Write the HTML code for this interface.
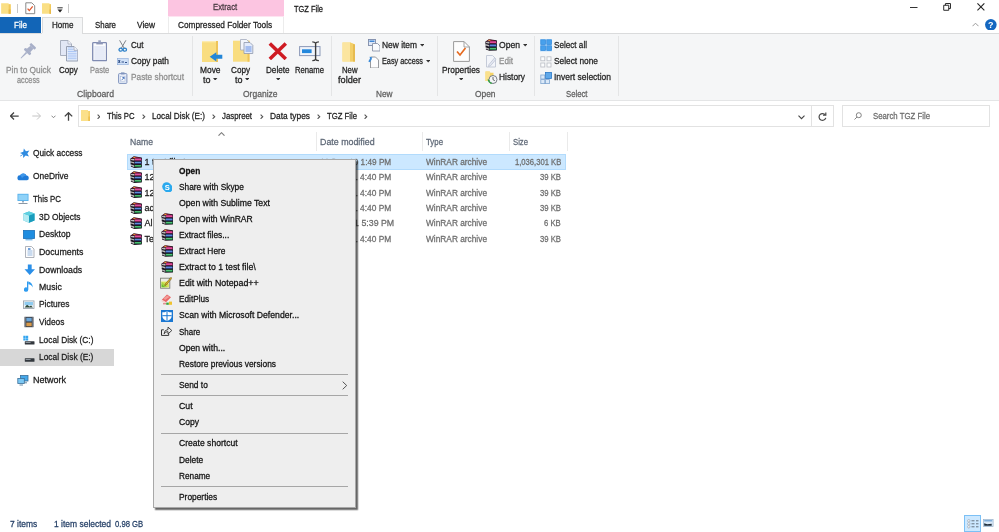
<!DOCTYPE html>
<html><head><meta charset="utf-8"><title>TGZ File</title>
<style>
html,body{margin:0;padding:0;background:#fff;}
body{width:999px;height:532px;overflow:hidden;position:relative;font-family:"Liberation Sans",sans-serif;}
.b{position:absolute;display:block;}
.t{-webkit-text-stroke:0.26px;transform-origin:0 0;position:absolute;white-space:nowrap;line-height:12px;height:12px;}
#w{position:absolute;left:0;top:0;width:999px;height:532px;overflow:hidden;will-change:transform;}
</style></head><body><div id="w">
<div class="b" style="left:0px;top:0px;width:999px;height:17px;background:#fff;"></div>
<div class="b" style="left:168px;top:0px;width:116px;height:16px;background:#fcc5e1;"></div>
<div class="b" style="left:168px;top:16px;width:116px;height:1px;background:#fee4f1;"></div>
<div class="t" style="left:212.80px;top:1.00px;font-size:9.00px;color:#45383f;transform:scaleX(0.8641);">Extract</div>
<div class="t" style="left:294.00px;top:3.00px;font-size:8.80px;color:#1a1a1a;transform:scaleX(0.8475);">TGZ File</div>
<svg class="b" style="left:1.2px;top:2.7px;" width="9.8" height="11" viewBox="0 0 9.500 11"><path d="M0 0.300h7.500v1h2v9.500h-9.500z" fill="#fadf85"/><path d="M7.500 1.300h2v9.500h-2z" fill="#f1c95c"/><path d="M7.500 6.500h2v4.300h-2z" fill="#e8b94a"/></svg>
<div class="b" style="left:17px;top:4px;width:1px;height:9px;background:#c8c8c8;"></div>
<svg class="b" style="left:25px;top:2.2px;" width="10.5" height="12.5" viewBox="0 0 10.5 12.5"><path d="M0.8 0.8h6l2.9 2.9v8h-8.9z" fill="#fff" stroke="#8a8a8a" stroke-width="1"/><path d="M2.6 6.6l1.7 2 3.4-4.2" fill="none" stroke="#e0552a" stroke-width="1.3"/></svg>
<svg class="b" style="left:41.8px;top:2.7px;" width="9.5" height="11" viewBox="0 0 9.500 11"><path d="M0 0.300h7.500v1h2v9.500h-9.500z" fill="#fadf85"/><path d="M7.500 1.300h2v9.500h-2z" fill="#f1c95c"/><path d="M7.500 6.500h2v4.300h-2z" fill="#e8b94a"/></svg>
<svg class="b" style="left:56.5px;top:6.5px;" width="6" height="6" viewBox="0 0 6 6"><rect x="0.3" y="0.3" width="5.4" height="1" fill="#333"/><path d="M0.5 2.6h5l-2.5 2.8z" fill="#222"/></svg>
<div class="b" style="left:68px;top:4px;width:1px;height:9px;background:#c8c8c8;"></div>
<svg class="b" style="left:910.4px;top:6.9px;" width="7.5" height="1" viewBox="0 0 7.500 1"><rect width="7.500" height="1" fill="#333"/></svg>
<svg class="b" style="left:943px;top:3.1px;" width="8.2" height="7.8" viewBox="0 0 9 9"><path d="M0.600 2.600h5.800v5.800h-5.800z" fill="none" stroke="#2a2a2a" stroke-width="1.150"/><path d="M2.600 2.600v-2h5.800v5.800h-2" fill="none" stroke="#2a2a2a" stroke-width="1.150"/></svg>
<svg class="b" style="left:977px;top:3.3px;" width="7.8" height="7.8" viewBox="0 0 9 9"><path d="M0.500 0.500l8 8M8.500 0.500l-8 8" stroke="#222" stroke-width="1.250" fill="none"/></svg>
<div class="b" style="left:0px;top:17px;width:999px;height:16.5px;background:#fff;"></div>
<div class="b" style="left:0px;top:17px;width:41px;height:16px;background:#1265b7;"></div>
<div class="t" style="left:14.00px;top:19.00px;font-size:9.00px;color:#fff;transform:scaleX(0.8965);">File</div>
<div class="b" style="left:41.5px;top:17px;width:41.5px;height:17px;background:#f5f6f7;border:1px solid #dadbdc;border-bottom:none;box-sizing:border-box;"></div>
<div class="t" style="left:51.50px;top:19.00px;font-size:9.00px;color:#232323;transform:scaleX(0.8956);">Home</div>
<div class="t" style="left:94.50px;top:19.00px;font-size:9.00px;color:#232323;transform:scaleX(0.8745);">Share</div>
<div class="t" style="left:137.00px;top:19.00px;font-size:9.00px;color:#232323;transform:scaleX(0.9305);">View</div>
<div class="b" style="left:168px;top:17px;width:116px;height:16px;background:#fff;border-left:1px solid #ececec;border-right:1px solid #ececec;box-sizing:border-box;"></div>
<div class="t" style="left:177.80px;top:19.00px;font-size:9.00px;color:#232323;transform:scaleX(0.9202);">Compressed Folder Tools</div>
<svg class="b" style="left:971.5px;top:21.5px;" width="7" height="5" viewBox="0 0 7 5"><path d="M0.5 4.2l3-3 3 3" fill="none" stroke="#9a9a9a" stroke-width="1"/></svg>
<svg class="b" style="left:985.2px;top:18.6px;" width="11.7" height="11.7" viewBox="0 0 11.500 11.500"><circle cx="5.750" cy="5.750" r="5.700" fill="#1467c0"/><text x="5.750" y="9.100" font-size="8.800" font-weight="700" text-anchor="middle" fill="#fff" font-family="Liberation Sans, sans-serif">?</text></svg>
<div class="b" style="left:0px;top:33px;width:999px;height:67.5px;background:#f5f6f7;border-top:1px solid #dadbdc;border-bottom:1px solid #e4e5e6;box-sizing:border-box;"></div>
<div class="b" style="left:42px;top:33px;width:40px;height:1.2px;background:#f5f6f7;"></div>
<div class="b" style="left:191.5px;top:36px;width:1px;height:60px;background:#e4e5e6;"></div>
<div class="b" style="left:331px;top:36px;width:1px;height:60px;background:#e4e5e6;"></div>
<div class="b" style="left:437px;top:36px;width:1px;height:60px;background:#e4e5e6;"></div>
<div class="b" style="left:534px;top:36px;width:1px;height:60px;background:#e4e5e6;"></div>
<div class="b" style="left:617.5px;top:36px;width:1px;height:60px;background:#e4e5e6;"></div>
<svg class="b" style="left:18px;top:40px;" width="20" height="20" viewBox="18 40 20 20"><g transform="translate(26.300,52.800) rotate(45)" fill="#a7afc8"><rect x="-3.600" y="-10.500" width="7.200" height="2.600" rx="0.800"/><path d="M-2.100 -8h4.200l.400 5.200h-5z"/><rect x="-4.200" y="-3.200" width="8.400" height="2.800" rx="1"/><path d="M-0.900 -0.500h1.800l-.500 8.200h-.800z"/></g></svg>
<div class="t" style="left:5.90px;top:64.00px;font-size:9.00px;color:#8e8e8e;transform:scaleX(0.9234);">Pin to Quick</div>
<div class="t" style="left:17.00px;top:74.00px;font-size:9.00px;color:#8e8e8e;transform:scaleX(0.8104);">access</div>
<svg class="b" style="left:59.8px;top:40.2px;" width="18.5" height="21.5" viewBox="0 0 18.500 21.500"><path d="M0.500 0.500h7.500l3.500 3.500v11.500h-11z" fill="#e2e7f5" stroke="#a0a7b8" stroke-width="0.900"/><path d="M8 0.500v3.500h3.500" fill="#f4f6fb" stroke="#a0a7b8" stroke-width="0.700"/><path d="M6.500 6.500h7.500l3.800 3.800v10.700h-11.300z" fill="#e6eefc" stroke="#8f97aa" stroke-width="0.900"/><g stroke="#a6c2f4" stroke-width="0.900"><path d="M7.800 11.500h8.800M7.800 13.300h8.800M7.800 15.100h8.800M7.800 16.900h8.800M7.800 18.700h8.800"/><path d="M7.800 9.700h5.500M7.800 7.900h5"/></g><path d="M14 6.500v3.800h3.800" fill="#f4f7fd" stroke="#8f97aa" stroke-width="0.700"/></svg>
<div class="t" style="left:58.80px;top:64.00px;font-size:9.00px;color:#232323;transform:scaleX(0.8948);">Copy</div>
<svg class="b" style="left:92px;top:40px;" width="15.2" height="21.5" viewBox="0 0 15.200 21.500"><rect x="0.700" y="2.700" width="13.800" height="18" rx="0.800" fill="#fbfcfe" stroke="#7f8bb2" stroke-width="1.300"/><path d="M4.300 2h6.600v2.400h-6.600z" fill="#8b95b6"/><rect x="6.300" y="0.300" width="2.600" height="2.200" fill="#9aa3c0"/><g stroke="#c9d3ee" stroke-width="0.800"><path d="M2.300 7h10.600M2.300 9h10.600M2.300 11h10.600M2.300 13h10.600M2.300 15h10.600M2.300 17h10.600M2.300 19h10.600"/></g></svg>
<div class="t" style="left:89.50px;top:64.00px;font-size:9.00px;color:#8e8e8e;transform:scaleX(0.8343);">Paste</div>
<svg class="b" style="left:118.3px;top:39.5px;" width="9.5" height="12" viewBox="0 0 9.500 12"><path d="M1.600 0.300l4.600 8M7.900 0.300l-4.600 8" stroke="#7d8288" stroke-width="1" fill="none"/><ellipse cx="2.700" cy="9.700" rx="1.700" ry="1.500" fill="none" stroke="#2a7fc8" stroke-width="1.300"/><ellipse cx="6.800" cy="9.700" rx="1.700" ry="1.500" fill="none" stroke="#2a7fc8" stroke-width="1.300"/></svg>
<div class="t" style="left:131.00px;top:39.00px;font-size:9.00px;color:#232323;transform:scaleX(0.8925);">Cut</div>
<svg class="b" style="left:117px;top:58px;" width="11.5" height="7" viewBox="0 0 11.500 7"><rect x="0.300" y="0.300" width="10.900" height="6.400" fill="#cfe0f7" stroke="#8aa9d6" stroke-width="0.600"/><path d="M1.500 2l1.500 3M3 2l-1.500 3M4.500 4h2.500M8 4.500h2" stroke="#1f3f7a" stroke-width="0.900"/></svg>
<div class="t" style="left:131.00px;top:55.00px;font-size:9.00px;color:#232323;transform:scaleX(0.9263);">Copy path</div>
<svg class="b" style="left:118px;top:71.5px;" width="9.5" height="12" viewBox="0 0 9.500 12"><rect x="0.600" y="1.600" width="8.300" height="9.800" rx="0.800" fill="#e6ecf8" stroke="#7f93bd" stroke-width="1"/><rect x="3" y="0.400" width="3.500" height="2" fill="#7f93bd"/><rect x="2.600" y="4.500" width="4.400" height="4.600" fill="#fff" stroke="#9fb0d2" stroke-width="0.500"/><path d="M3.600 8.200l2.400-2.600M4.400 5.500h1.700v1.700" stroke="#2c5fb3" stroke-width="0.800" fill="none"/></svg>
<div class="t" style="left:131.00px;top:71.00px;font-size:9.00px;color:#8e8e8e;transform:scaleX(0.9213);">Paste shortcut</div>
<div class="t" style="left:77.00px;top:88.00px;font-size:9.00px;color:#5f5f5f;transform:scaleX(0.9605);">Clipboard</div>
<svg class="b" style="left:202px;top:40.5px;" width="20.5" height="21.5" viewBox="0 0 20.500 21.500"><path d="M0 0h16v21h-16z" fill="#f9dd80"/><path d="M0 0h16v1.300h-16z" fill="#fcebb0"/><path d="M14 0h2v21h-2z" fill="#eec45a"/><path d="M20.300 13.800h-6v-2.600l-6.600 4.600 6.600 4.600v-2.600h6z" fill="#2386d8"/></svg>
<div class="t" style="left:199.50px;top:64.00px;font-size:9.00px;color:#232323;transform:scaleX(0.9315);">Move</div>
<div class="t" style="left:203.00px;top:74.00px;font-size:9.00px;color:#232323;transform:scaleX(0.9993);">to</div>
<svg class="b" style="left:213.2px;top:77.8px;" width="4.4" height="2.6" viewBox="0 0 5 3"><path d="M0 0h5l-2.500 3z" fill="#333"/></svg>
<svg class="b" style="left:233px;top:38.8px;" width="20.5" height="23" viewBox="0 0 20.500 23"><path d="M0 1.700h16.500v21h-16.500z" fill="#f9dd80"/><path d="M14.500 1.700h2v21h-2z" fill="#eec45a"/><path d="M7.500 0.500h6l2.500 2.500v8h-8.500z" fill="#f2f5fb" stroke="#a3abbd" stroke-width="0.800"/><path d="M11 3.500h6l2.800 2.800v8.200h-8.800z" fill="#e3ebfb" stroke="#8f98ac" stroke-width="0.800"/><rect x="12.500" y="7" width="6" height="6" fill="#a4bdf0"/></svg>
<div class="t" style="left:231.00px;top:64.00px;font-size:9.00px;color:#232323;transform:scaleX(0.9044);">Copy</div>
<div class="t" style="left:234.50px;top:74.00px;font-size:9.00px;color:#232323;transform:scaleX(0.9993);">to</div>
<svg class="b" style="left:244.5px;top:77.8px;" width="4.4" height="2.6" viewBox="0 0 5 3"><path d="M0 0h5l-2.500 3z" fill="#333"/></svg>
<svg class="b" style="left:268px;top:41.8px;" width="19.5" height="18.5" viewBox="0 0 19.500 18.500"><path d="M1.800 1.500l16 15.500M17.800 1.500l-16 15.500" stroke="#cf1b23" stroke-width="3.500" fill="none"/></svg>
<div class="t" style="left:265.50px;top:64.00px;font-size:9.00px;color:#232323;transform:scaleX(0.9034);">Delete</div>
<svg class="b" style="left:275.5px;top:77.8px;" width="4.4" height="2.6" viewBox="0 0 5 3"><path d="M0 0h5l-2.500 3z" fill="#333"/></svg>
<svg class="b" style="left:299px;top:41px;" width="23" height="20.5" viewBox="0 0 23 20.500"><rect x="0.600" y="5.600" width="20.400" height="9" fill="#f0f4fb" stroke="#8c99b8" stroke-width="1"/><rect x="3" y="8.300" width="9.600" height="3.800" fill="#2387dc"/><path d="M13.300 0.900q2.400 0 3.300 1.300q0.900-1.300 3.300-1.300M16.600 2v16.500M13.300 19.600q2.400 0 3.300-1.300q0.900 1.300 3.300 1.300" stroke="#3a3a3a" stroke-width="1.400" fill="none"/></svg>
<div class="t" style="left:295.00px;top:64.00px;font-size:9.00px;color:#232323;transform:scaleX(0.8525);">Rename</div>
<div class="t" style="left:243.00px;top:88.00px;font-size:9.00px;color:#5f5f5f;transform:scaleX(0.9448);">Organize</div>
<svg class="b" style="left:342px;top:42px;" width="14" height="20" viewBox="0 0 14 20"><path d="M0.500 0.500h8l4.500 2v17h-12.500z" fill="#f9dc7d"/><path d="M0.500 0.500h7.500v19h-7.500z" fill="#fbe5a0"/><path d="M8 0.500l5 2v17l-5-0z" fill="#f3cf68"/><path d="M11 2l2 0.800v16.700h-2z" fill="#e6bb50"/></svg>
<div class="t" style="left:342.00px;top:64.00px;font-size:9.00px;color:#232323;transform:scaleX(0.8609);">New</div>
<div class="t" style="left:338.00px;top:74.00px;font-size:9.00px;color:#232323;transform:scaleX(1.0217);">folder</div>
<svg class="b" style="left:367.5px;top:39px;" width="12.5" height="12.5" viewBox="0 0 12.500 12.500"><rect x="0.500" y="0.500" width="7" height="6" fill="#dfe8f8" stroke="#7d8aa8" stroke-width="0.900"/><rect x="1.500" y="1.500" width="5" height="1.500" fill="#3f86d6"/><path d="M4.500 4.500h5l2.500 2.500v5h-7.500z" fill="#fafbfe" stroke="#8a93a8" stroke-width="0.900"/></svg>
<div class="t" style="left:382.00px;top:39.00px;font-size:9.00px;color:#232323;transform:scaleX(0.9332);">New item</div>
<svg class="b" style="left:419.5px;top:44px;" width="4.4" height="2.6" viewBox="0 0 5 3"><path d="M0 0h5l-2.500 3z" fill="#333"/></svg>
<svg class="b" style="left:368px;top:55.5px;" width="11.5" height="12.5" viewBox="0 0 11.500 12.500"><path d="M2.500 1h5l3 3v8h-8z" fill="#fdfdfe" stroke="#8c8f94" stroke-width="0.900"/><path d="M0.300 5.500l2.200-4 1.500 1.200-2 3.500z" fill="#3a8ad8"/><path d="M1.500 0.800l3 0.700-2 2z" fill="#3a8ad8"/></svg>
<div class="t" style="left:382.00px;top:55.00px;font-size:9.00px;color:#232323;transform:scaleX(0.8116);">Easy access</div>
<svg class="b" style="left:426px;top:60px;" width="4.4" height="2.6" viewBox="0 0 5 3"><path d="M0 0h5l-2.500 3z" fill="#333"/></svg>
<div class="t" style="left:375.50px;top:88.00px;font-size:9.00px;color:#5f5f5f;transform:scaleX(0.9165);">New</div>
<svg class="b" style="left:452.5px;top:40.5px;" width="17" height="21" viewBox="0 0 17 21"><path d="M0.600 0.600h10.500l5.300 5.300v14.500h-15.800z" fill="#fdfdfd" stroke="#9a9a9a" stroke-width="1"/><path d="M11 0.600v5.400h5.400" fill="none" stroke="#9a9a9a" stroke-width="0.900"/><path d="M4 10.500l3 3.500 5.500-7" fill="none" stroke="#e66a1f" stroke-width="1.700"/></svg>
<div class="t" style="left:442.00px;top:64.00px;font-size:9.00px;color:#232323;transform:scaleX(0.9265);">Properties</div>
<svg class="b" style="left:459px;top:77.8px;" width="4.4" height="2.6" viewBox="0 0 5 3"><path d="M0 0h5l-2.500 3z" fill="#333"/></svg>
<svg class="b" style="left:484.5px;top:39px;" width="12" height="12" viewBox="0 0 12 12"><path d="M0.200 2.700L3.800 0.200L11.700 1.300Q12.300 3 11.700 4.600Q12.300 6.400 11.700 8Q12.300 9.700 11.700 11.400L4.300 11.800L0.800 10.500L1 9.200L0.500 7.500L0.800 6L0.300 4.300Z" fill="#1d1622"/><path d="M1 2.500L3.900 0.600L11 1.500L4.800 2.100Z" fill="#8c1a3c"/><path d="M2.900 1.200L4.100 0.600L5.800 2L4.500 2.200Z" fill="#e8a030"/><path d="M4.800 2.300H11.200Q11.700 3.300 11.200 4.300H4.800Z" fill="#d92a84"/><path d="M5.200 3.100H11" stroke="#f584c0" stroke-width="0.600"/><path d="M4.600 5.600H11.200Q11.700 6.500 11.200 7.400H4.600Z" fill="#3562c6"/><path d="M5 6.300H11" stroke="#86b4f2" stroke-width="0.600"/><path d="M4.600 8.800H11.200Q11.700 9.700 11.200 10.700H4.600Z" fill="#1f9a4a"/><path d="M5 9.500H11" stroke="#74d894" stroke-width="0.600"/><path d="M0.700 2.900L4.300 2.800V4.500L0.900 3.900Z" fill="#f1f1f1"/><path d="M0.800 3.400L4.300 3.700" stroke="#444" stroke-width="0.350"/><path d="M0.800 5.300L4.100 6.100V7.500L1 6.500Z" fill="#f1f1f1"/><path d="M0.900 5.900L4.100 6.800" stroke="#444" stroke-width="0.350"/><path d="M1 8.400L4.100 9.400V10.800L1.200 9.700Z" fill="#f1f1f1"/><path d="M1.100 9L4.100 10.100" stroke="#444" stroke-width="0.350"/></svg>
<div class="t" style="left:499.00px;top:39.00px;font-size:9.00px;color:#232323;transform:scaleX(0.9539);">Open</div>
<svg class="b" style="left:523px;top:44px;" width="4.4" height="2.6" viewBox="0 0 5 3"><path d="M0 0h5l-2.500 3z" fill="#333"/></svg>
<svg class="b" style="left:485.5px;top:55px;" width="11" height="12.5" viewBox="0 0 11 12.500"><path d="M0.500 0.500h6l3 3v8.500h-9z" fill="#f3f5fa" stroke="#c0c6d4" stroke-width="0.900"/><path d="M3 9.500l5.500-6.500 1.500 1.300-5.500 6.500-2 .7z" fill="#e4e8f2" stroke="#b5bccd" stroke-width="0.700"/></svg>
<div class="t" style="left:499.00px;top:55.00px;font-size:9.00px;color:#8e8e8e;transform:scaleX(0.9028);">Edit</div>
<svg class="b" style="left:485px;top:71px;" width="12.5" height="13" viewBox="0 0 12.500 13"><path d="M0.500 0.500h4l1 1.200h3v8.300h-8z" fill="#f5d366"/><path d="M0.500 0.500h4.500v9.500h-4.500z" fill="#fae08c"/><circle cx="8" cy="8.500" r="4" fill="#f4f6f8" stroke="#6a7078" stroke-width="0.900"/><path d="M8 6v2.700l1.800 1" stroke="#444" stroke-width="0.800" fill="none"/><path d="M3.200 8.500a4.800 4.800 0 0 0 3.500 4" stroke="#2da13c" stroke-width="1.400" fill="none"/></svg>
<div class="t" style="left:499.00px;top:71.00px;font-size:9.00px;color:#232323;transform:scaleX(0.9285);">History</div>
<div class="t" style="left:475.00px;top:88.00px;font-size:9.00px;color:#5f5f5f;transform:scaleX(0.9312);">Open</div>
<svg class="b" style="left:540px;top:39.3px;" width="12.4" height="12.4" viewBox="0 0 12.400 12.400"><rect x="0" y="0" width="12.400" height="12.400" fill="#b9dcf9"/><g fill="#48a0ec" stroke="#2c84d8" stroke-width="0.600"><rect x="0.800" y="0.800" width="4.800" height="4.800"/><rect x="6.800" y="0.800" width="4.800" height="4.800"/><rect x="0.800" y="6.800" width="4.800" height="4.800"/><rect x="6.800" y="6.800" width="4.800" height="4.800"/></g></svg>
<div class="t" style="left:554.00px;top:39.00px;font-size:9.00px;color:#232323;transform:scaleX(0.9037);">Select all</div>
<svg class="b" style="left:540px;top:55.5px;" width="12" height="12" viewBox="0 0 12 12"><g fill="#fbfcfd" stroke="#b8bcc4" stroke-width="0.800"><rect x="0.800" y="0.800" width="4" height="4"/><rect x="7" y="0.800" width="4" height="4"/><rect x="0.800" y="7" width="4" height="4"/><rect x="7" y="7" width="4" height="4"/></g></svg>
<div class="t" style="left:554.00px;top:55.00px;font-size:9.00px;color:#232323;transform:scaleX(0.9257);">Select none</div>
<svg class="b" style="left:540px;top:71.5px;" width="12" height="12" viewBox="0 0 12 12"><rect x="5.500" y="0.500" width="6" height="6" fill="#5fa8ea" stroke="#2a78c8" stroke-width="0.800"/><g fill="#dbe9f8" stroke="#7fa5d0" stroke-width="0.800"><rect x="0.800" y="3" width="4" height="4"/><rect x="0.800" y="7.600" width="4" height="4"/><rect x="5.400" y="7.600" width="4" height="4"/></g></svg>
<div class="t" style="left:554.00px;top:71.00px;font-size:9.00px;color:#232323;transform:scaleX(0.9417);">Invert selection</div>
<div class="t" style="left:565.50px;top:88.00px;font-size:9.00px;color:#5f5f5f;transform:scaleX(0.8596);">Select</div>
<div class="b" style="left:0px;top:101px;width:999px;height:31px;background:#fff;"></div>
<svg class="b" style="left:9.5px;top:112px;" width="9" height="8" viewBox="0 0 9 8"><path d="M8.700 4h-8M4 0.500l-3.500 3.500 3.500 3.500" fill="none" stroke="#444" stroke-width="1.250"/></svg>
<svg class="b" style="left:31.5px;top:112px;" width="9" height="8" viewBox="0 0 9 8"><path d="M0.300 4h8M5 0.500l3.500 3.500-3.500 3.500" fill="none" stroke="#c4c4c4" stroke-width="1"/></svg>
<svg class="b" style="left:50.5px;top:114.5px;" width="5" height="4" viewBox="0 0 5 4"><path d="M0.500 0.700l2 2 2-2" fill="none" stroke="#777" stroke-width="0.900"/></svg>
<svg class="b" style="left:63.5px;top:111.5px;" width="9" height="9" viewBox="0 0 9 9"><path d="M4.500 8.800v-7.800M0.800 4.400l3.700-3.700 3.700 3.700" fill="none" stroke="#444" stroke-width="1.300"/></svg>
<div class="b" style="left:77.5px;top:105px;width:734.5px;height:21.5px;background:#fff;border:1px solid #e2e2e2;box-sizing:border-box;"></div>
<div class="b" style="left:811px;top:105px;width:22.5px;height:21.5px;background:#fff;border:1px solid #e2e2e2;box-sizing:border-box;"></div>
<svg class="b" style="left:81px;top:110px;" width="9.3" height="11.3" viewBox="0 0 9.300 11.300"><path d="M0 0h7v1h2.300v10.300h-9.300z" fill="#fbe08a"/><path d="M7.300 1h2v10.300h-2z" fill="#f5d16a"/><path d="M7.300 6.500h2v4.800h-2z" fill="#eec050"/></svg>
<svg class="b" style="left:96.7px;top:113.9px;" width="3.5" height="5.4" viewBox="0 0 3.500 5.400"><path d="M0.600 0.600l2.100 2.100-2.100 2.100" fill="none" stroke="#555" stroke-width="1.150"/></svg>
<svg class="b" style="left:142.2px;top:113.9px;" width="3.5" height="5.4" viewBox="0 0 3.500 5.400"><path d="M0.600 0.600l2.100 2.100-2.100 2.100" fill="none" stroke="#555" stroke-width="1.150"/></svg>
<svg class="b" style="left:212.2px;top:113.9px;" width="3.5" height="5.4" viewBox="0 0 3.500 5.400"><path d="M0.600 0.600l2.100 2.100-2.100 2.100" fill="none" stroke="#555" stroke-width="1.150"/></svg>
<svg class="b" style="left:260.2px;top:113.9px;" width="3.5" height="5.4" viewBox="0 0 3.500 5.400"><path d="M0.600 0.600l2.100 2.100-2.100 2.100" fill="none" stroke="#555" stroke-width="1.150"/></svg>
<svg class="b" style="left:317.2px;top:113.9px;" width="3.5" height="5.4" viewBox="0 0 3.500 5.400"><path d="M0.600 0.600l2.100 2.100-2.100 2.100" fill="none" stroke="#555" stroke-width="1.150"/></svg>
<svg class="b" style="left:364.2px;top:113.9px;" width="3.5" height="5.4" viewBox="0 0 3.500 5.400"><path d="M0.600 0.600l2.100 2.100-2.100 2.100" fill="none" stroke="#555" stroke-width="1.150"/></svg>
<div class="t" style="left:107.00px;top:110.00px;font-size:9.00px;color:#232323;transform:scaleX(0.8592);">This PC</div>
<div class="t" style="left:152.00px;top:110.00px;font-size:9.00px;color:#232323;transform:scaleX(0.9058);">Local Disk (E:)</div>
<div class="t" style="left:221.50px;top:110.00px;font-size:9.00px;color:#232323;transform:scaleX(0.8692);">Jaspreet</div>
<div class="t" style="left:270.00px;top:110.00px;font-size:9.00px;color:#232323;transform:scaleX(0.9298);">Data types</div>
<div class="t" style="left:327.00px;top:110.00px;font-size:9.00px;color:#232323;transform:scaleX(0.8572);">TGZ File</div>
<svg class="b" style="left:797.5px;top:114.5px;" width="7" height="5" viewBox="0 0 7 5"><path d="M0.500 0.700l3 3 3-3" fill="none" stroke="#444" stroke-width="1.100"/></svg>
<svg class="b" style="left:818px;top:111.5px;" width="9" height="9.5" viewBox="0 0 9 9.500"><path d="M7.300 3a3.400 3.400 0 1 0 .5 2.800" fill="none" stroke="#4a4a4a" stroke-width="1.200"/><path d="M5 3.200h2.800v-2.800" fill="none" stroke="#4a4a4a" stroke-width="1.200"/></svg>
<div class="b" style="left:842px;top:105px;width:148px;height:21.5px;background:#fff;border:1px solid #e2e2e2;box-sizing:border-box;"></div>
<svg class="b" style="left:853.5px;top:112px;" width="8" height="8" viewBox="0 0 8 8"><circle cx="4.800" cy="3.200" r="2.500" fill="none" stroke="#777" stroke-width="0.900"/><path d="M3 5l-2.500 2.500" stroke="#777" stroke-width="0.900"/></svg>
<div class="t" style="left:873.00px;top:110.00px;font-size:9.00px;color:#6d6d6d;transform:scaleX(0.8656);">Search TGZ File</div>
<div class="b" style="left:0px;top:348.6px;width:114px;height:17.2px;background:#d7d7d7;"></div>
<svg class="b" style="left:19.5px;top:148.2px;" width="10" height="10" viewBox="0 0 11 11"><g transform="rotate(-14 5.5 5.5)"><path d="M5.500 0.300l1.500 3.500 3.800 .300-2.900 2.500.9 3.700-3.300-2-3.300 2 .9-3.700-2.900-2.500 3.800-.300z" fill="#2f8be0"/></g><path d="M0.300 8.800q2.500-.8 4-3" stroke="#2f8be0" stroke-width="0.900" fill="none"/></svg>
<div class="t" style="left:33.00px;top:147.00px;font-size:9.00px;color:#1c1c1c;transform:scaleX(0.9250);">Quick access</div>
<svg class="b" style="left:17px;top:170.7px;" width="12.5" height="11" viewBox="0 0 12.500 11"><path d="M2.800 9.300a2.500 2.500 0 0 1 .2-5 3.700 3.700 0 0 1 6.500 .300 2.400 2.400 0 0 1 .600 4.700z" fill="#1f7bd8"/><path d="M3 4.300a3.700 3.700 0 0 1 6.500 .300q-3 0-4.500 2.500q-1-2-2-2.800z" fill="#3f97ea"/></svg>
<div class="t" style="left:33.00px;top:170.00px;font-size:9.00px;color:#1c1c1c;transform:scaleX(0.9339);">OneDrive</div>
<svg class="b" style="left:17.3px;top:193.45px;" width="12" height="11.5" viewBox="0 0 12 11.500"><rect x="0.500" y="0.800" width="11" height="7.200" fill="#52aeea"/><rect x="1.300" y="1.600" width="9.400" height="5.600" fill="#8fd2f8"/><rect x="5" y="8" width="2" height="1.500" fill="#9ab"/><path d="M1.500 10.500h9" stroke="#8a98a6" stroke-width="1"/></svg>
<div class="t" style="left:33.00px;top:193.00px;font-size:9.00px;color:#1c1c1c;transform:scaleX(0.8749);">This PC</div>
<svg class="b" style="left:23.3px;top:211.0px;" width="12" height="12" viewBox="0 0 12 12"><path d="M6 0.500l5.500 2v7l-5.500 2.200-5.500-2.200v-7z" fill="#2fb6cf"/><path d="M0.500 2.500l5.500 2v7.200l-5.500-2.200z" fill="#b4ebf2"/><path d="M6 4.500l5.500-2v7l-5.500 2.200z" fill="#1a9cbc"/><path d="M6 0.500l5.500 2-5.500 2-5.500-2z" fill="#5fd0e0"/></svg>
<div class="t" style="left:38.60px;top:211.00px;font-size:9.00px;color:#1c1c1c;transform:scaleX(0.9300);">3D Objects</div>
<svg class="b" style="left:23px;top:228.6px;" width="12" height="12" viewBox="0 0 12 12"><rect x="0.500" y="1.500" width="11" height="8" fill="#1f8de0" stroke="#1a6fb8" stroke-width="0.800"/><path d="M2.500 10.800h7" stroke="#4aa0e0" stroke-width="1"/></svg>
<div class="t" style="left:38.60px;top:228.00px;font-size:9.00px;color:#1c1c1c;transform:scaleX(0.9511);">Desktop</div>
<svg class="b" style="left:24px;top:246.2px;" width="11" height="12" viewBox="0 0 11 12"><path d="M1.500 0.500h6l2.500 2.500v8.500h-8.500z" fill="#fcfcfd" stroke="#9aa0aa" stroke-width="0.800"/><path d="M3.500 5h5M3.500 7h5M3.500 9h5" stroke="#7fa8d8" stroke-width="0.800"/><rect x="4" y="2" width="2.500" height="2" fill="#6ea0dc"/></svg>
<div class="t" style="left:38.60px;top:246.00px;font-size:9.00px;color:#1c1c1c;transform:scaleX(0.9755);">Documents</div>
<svg class="b" style="left:23.7px;top:264.05px;" width="11.5" height="11.5" viewBox="0 0 12 11.500"><path d="M4 0.300h4v5h3.500l-5.500 6-5.500-6h3.500z" fill="#2a8fe8"/></svg>
<div class="t" style="left:38.60px;top:264.00px;font-size:9.00px;color:#1c1c1c;transform:scaleX(0.9680);">Downloads</div>
<svg class="b" style="left:24px;top:280.9px;" width="10.5" height="12" viewBox="0 0 10.500 12"><path d="M4.300 0.500l0 8a2.200 2.200 0 1 1 -1.300-2v-6z" fill="#2f9cf0"/><path d="M4.300 0.500q4.200 1.200 4.500 6q-1.800-3.300-4.500-3.300z" fill="#2f9cf0"/></svg>
<div class="t" style="left:38.60px;top:281.00px;font-size:9.00px;color:#1c1c1c;transform:scaleX(0.9702);">Music</div>
<svg class="b" style="left:23.3px;top:298.75px;" width="11.5" height="11.5" viewBox="0 0 12 12"><rect x="0.500" y="2" width="11" height="8" fill="#f4f7fa" stroke="#8f99a4" stroke-width="0.800"/><rect x="1.600" y="3.100" width="8.800" height="3.500" fill="#8ecbf0"/><path d="M1.600 8.900l2.600-2.900 2.600 1.700 1.600-.9 2 2.100z" fill="#2f4a3a"/></svg>
<div class="t" style="left:38.60px;top:298.00px;font-size:9.00px;color:#1c1c1c;transform:scaleX(0.9351);">Pictures</div>
<svg class="b" style="left:23px;top:316.0px;" width="12" height="12" viewBox="0 0 12 12"><rect x="1.500" y="0.800" width="9" height="10.400" fill="#3a3f48"/><rect x="3.300" y="1.800" width="5.400" height="3.600" fill="#6aa6d8"/><rect x="3.300" y="6.600" width="5.400" height="3.600" fill="#d89a4a"/><path d="M2.400 1.500v9.500M9.600 1.500v9.500" stroke="#cfd3d8" stroke-width="0.700" stroke-dasharray="1 1"/></svg>
<div class="t" style="left:38.60px;top:316.00px;font-size:9.00px;color:#1c1c1c;transform:scaleX(0.9286);">Videos</div>
<svg class="b" style="left:23px;top:333.7px;" width="12" height="12" viewBox="0 0 12 12"><rect x="1.800" y="7.300" width="9.700" height="3.300" rx="0.500" fill="#33383e"/><rect x="2.600" y="8.200" width="5" height="0.800" fill="#a6aeb6"/><path d="M0.300 1.800h2.300v2.200h-2.300zM2.900 1.800h2.300v2.200h-2.300zM0.300 4.300h2.300v2.200h-2.300zM2.900 4.300h2.300v2.200h-2.300z" fill="#35a6f0"/></svg>
<div class="t" style="left:38.60px;top:334.00px;font-size:9.00px;color:#1c1c1c;transform:scaleX(0.9219);">Local Disk (C:)</div>
<svg class="b" style="left:23px;top:351.2px;" width="12" height="12" viewBox="0 0 12 12"><rect x="1.800" y="7.200" width="9.700" height="3.500" rx="0.500" fill="#33383e"/><rect x="2.600" y="8.200" width="5" height="0.800" fill="#a6aeb6"/></svg>
<div class="t" style="left:38.60px;top:351.00px;font-size:9.00px;color:#1c1c1c;transform:scaleX(0.9297);">Local Disk (E:)</div>
<svg class="b" style="left:17px;top:374.4px;" width="12" height="12" viewBox="0 0 12 12"><rect x="3.500" y="1.500" width="7.500" height="5.500" fill="#45a8ea" stroke="#3a6f9a" stroke-width="0.800"/><rect x="0.800" y="4.500" width="6.500" height="5" fill="#7cc8f4" stroke="#3a6f9a" stroke-width="0.800"/><path d="M2.500 11h3.500M7 8.800h3" stroke="#5a7f9a" stroke-width="0.900"/></svg>
<div class="t" style="left:33.00px;top:374.00px;font-size:9.00px;color:#1c1c1c;transform:scaleX(0.9998);">Network</div>
<div class="t" style="left:10.40px;top:518.00px;font-size:9.00px;color:#243f66;transform:scaleX(0.9377);">7 items</div>
<div class="t" style="left:53.60px;top:518.00px;font-size:9.00px;color:#243f66;transform:scaleX(0.9417);">1 item selected</div>
<div class="t" style="left:115.40px;top:518.00px;font-size:9.00px;color:#243f66;transform:scaleX(0.8541);">0.98 GB</div>
<div class="b" style="left:964px;top:515px;width:16.5px;height:17px;background:#cce8ff;border:1px solid #7cc0f5;box-sizing:border-box;"></div>
<svg class="b" style="left:966.5px;top:518.5px;" width="12" height="10" viewBox="0 0 12 10"><g fill="#fff" stroke="#8a94a0" stroke-width="0.600"><circle cx="1.800" cy="1.800" r="1.200"/><circle cx="1.800" cy="4.800" r="1.200"/><circle cx="1.800" cy="7.800" r="1.200"/></g><path d="M4.500 1.800h3M9 1.800h2.500M4.500 4.800h3M9 4.800h2.500M4.500 7.800h3M9 7.800h2.500" stroke="#5a6470" stroke-width="0.900"/></svg>
<svg class="b" style="left:983px;top:519px;" width="10.5" height="8" viewBox="0 0 10.500 8"><rect x="0.400" y="0.400" width="9.700" height="7.200" fill="#dbeaf8" stroke="#9ab4cc" stroke-width="0.700"/><rect x="1.200" y="1.200" width="8" height="1.200" fill="#6a9fd0"/><path d="M1.200 6.800l0-2.500 3 1 4.500-.5v2z" fill="#1e2d3a"/></svg>
<div class="t" style="left:130.00px;top:136.00px;font-size:9.00px;color:#5f6977;transform:scaleX(0.9581);">Name</div>
<div class="t" style="left:320.40px;top:136.00px;font-size:9.00px;color:#5f6977;transform:scaleX(0.9833);">Date modified</div>
<div class="t" style="left:426.00px;top:136.00px;font-size:9.00px;color:#5f6977;transform:scaleX(0.8713);">Type</div>
<div class="t" style="left:513.00px;top:136.00px;font-size:9.00px;color:#5f6977;transform:scaleX(0.8568);">Size</div>
<svg class="b" style="left:217.5px;top:131.8px;" width="7" height="4.2" viewBox="0 0 7 4.200"><path d="M0.500 3.700l3-3 3 3" fill="none" stroke="#7e7e7e" stroke-width="1.100"/></svg>
<div class="b" style="left:315.6px;top:132px;width:1px;height:19px;background:#eaeaea;"></div>
<div class="b" style="left:421.6px;top:132px;width:1px;height:19px;background:#eaeaea;"></div>
<div class="b" style="left:508.7px;top:132px;width:1px;height:19px;background:#eaeaea;"></div>
<div class="b" style="left:566.7px;top:132px;width:1px;height:19px;background:#eaeaea;"></div>
<div class="b" style="left:127px;top:154.3px;width:438.5px;height:15.6px;background:#cce8ff;border:1px solid #b2dbfc;box-sizing:border-box;"></div>
<svg class="b" style="left:129.8px;top:155.7px;" width="12" height="12.2" viewBox="0 0 12 12"><path d="M0.200 2.700L3.800 0.200L11.700 1.300Q12.300 3 11.700 4.600Q12.300 6.400 11.700 8Q12.300 9.700 11.700 11.400L4.300 11.800L0.800 10.500L1 9.200L0.500 7.500L0.800 6L0.300 4.300Z" fill="#1d1622"/><path d="M1 2.500L3.900 0.600L11 1.500L4.800 2.100Z" fill="#8c1a3c"/><path d="M2.900 1.200L4.100 0.600L5.800 2L4.500 2.200Z" fill="#e8a030"/><path d="M4.800 2.300H11.200Q11.700 3.300 11.200 4.300H4.800Z" fill="#d92a84"/><path d="M5.200 3.100H11" stroke="#f584c0" stroke-width="0.600"/><path d="M4.600 5.600H11.200Q11.700 6.500 11.200 7.400H4.600Z" fill="#3562c6"/><path d="M5 6.300H11" stroke="#86b4f2" stroke-width="0.600"/><path d="M4.600 8.800H11.200Q11.700 9.700 11.200 10.700H4.600Z" fill="#1f9a4a"/><path d="M5 9.500H11" stroke="#74d894" stroke-width="0.600"/><path d="M0.700 2.900L4.300 2.800V4.500L0.900 3.900Z" fill="#f1f1f1"/><path d="M0.800 3.400L4.300 3.700" stroke="#444" stroke-width="0.350"/><path d="M0.800 5.300L4.100 6.100V7.500L1 6.500Z" fill="#f1f1f1"/><path d="M0.900 5.900L4.100 6.800" stroke="#444" stroke-width="0.350"/><path d="M1 8.400L4.100 9.400V10.800L1.200 9.700Z" fill="#f1f1f1"/><path d="M1.100 9L4.100 10.100" stroke="#444" stroke-width="0.350"/></svg>
<div class="t" style="left:144.50px;top:156.00px;font-size:9.00px;color:#1c1c1c;">1 test file.tgz</div>
<div class="t" style="left:320.40px;top:156.00px;font-size:9.00px;color:#6d6d6d;transform:scaleX(0.9124);">16-Dec-20 1:49 PM</div>
<div class="t" style="left:426.00px;top:156.00px;font-size:9.00px;color:#6d6d6d;transform:scaleX(0.9241);">WinRAR archive</div>
<div class="t" style="left:514.70px;top:156.00px;font-size:9.00px;color:#6d6d6d;transform:scaleX(0.8489);">1,036,301 KB</div>
<svg class="b" style="left:129.8px;top:171.1px;" width="12" height="12.2" viewBox="0 0 12 12"><path d="M0.200 2.700L3.800 0.200L11.700 1.300Q12.300 3 11.700 4.600Q12.300 6.400 11.700 8Q12.300 9.700 11.700 11.400L4.300 11.800L0.800 10.500L1 9.200L0.500 7.500L0.800 6L0.300 4.300Z" fill="#1d1622"/><path d="M1 2.500L3.900 0.600L11 1.500L4.800 2.100Z" fill="#8c1a3c"/><path d="M2.900 1.200L4.100 0.600L5.800 2L4.500 2.200Z" fill="#e8a030"/><path d="M4.800 2.300H11.200Q11.700 3.300 11.200 4.300H4.800Z" fill="#d92a84"/><path d="M5.200 3.100H11" stroke="#f584c0" stroke-width="0.600"/><path d="M4.600 5.600H11.200Q11.700 6.500 11.200 7.400H4.600Z" fill="#3562c6"/><path d="M5 6.300H11" stroke="#86b4f2" stroke-width="0.600"/><path d="M4.600 8.800H11.200Q11.700 9.700 11.200 10.700H4.600Z" fill="#1f9a4a"/><path d="M5 9.500H11" stroke="#74d894" stroke-width="0.600"/><path d="M0.700 2.900L4.300 2.800V4.500L0.900 3.900Z" fill="#f1f1f1"/><path d="M0.800 3.400L4.300 3.700" stroke="#444" stroke-width="0.350"/><path d="M0.800 5.300L4.100 6.100V7.500L1 6.500Z" fill="#f1f1f1"/><path d="M0.900 5.900L4.100 6.800" stroke="#444" stroke-width="0.350"/><path d="M1 8.400L4.100 9.400V10.800L1.200 9.700Z" fill="#f1f1f1"/><path d="M1.100 9L4.100 10.100" stroke="#444" stroke-width="0.350"/></svg>
<div class="t" style="left:144.50px;top:171.00px;font-size:9.00px;color:#1c1c1c;">123.tgz</div>
<div class="t" style="left:320.40px;top:171.00px;font-size:9.00px;color:#6d6d6d;transform:scaleX(0.9303);">08-Jan-21 4:40 PM</div>
<div class="t" style="left:426.00px;top:171.00px;font-size:9.00px;color:#6d6d6d;transform:scaleX(0.9241);">WinRAR archive</div>
<div class="t" style="left:540.00px;top:171.00px;font-size:9.00px;color:#6d6d6d;transform:scaleX(0.8566);">39 KB</div>
<svg class="b" style="left:129.8px;top:186.39999999999998px;" width="12" height="12.2" viewBox="0 0 12 12"><path d="M0.200 2.700L3.800 0.200L11.700 1.300Q12.300 3 11.700 4.600Q12.300 6.400 11.700 8Q12.300 9.700 11.700 11.400L4.300 11.800L0.800 10.500L1 9.200L0.500 7.500L0.800 6L0.300 4.300Z" fill="#1d1622"/><path d="M1 2.500L3.900 0.600L11 1.500L4.800 2.100Z" fill="#8c1a3c"/><path d="M2.900 1.200L4.100 0.600L5.800 2L4.500 2.200Z" fill="#e8a030"/><path d="M4.800 2.300H11.200Q11.700 3.300 11.200 4.300H4.800Z" fill="#d92a84"/><path d="M5.200 3.100H11" stroke="#f584c0" stroke-width="0.600"/><path d="M4.600 5.600H11.200Q11.700 6.500 11.200 7.400H4.600Z" fill="#3562c6"/><path d="M5 6.300H11" stroke="#86b4f2" stroke-width="0.600"/><path d="M4.600 8.800H11.200Q11.700 9.700 11.200 10.700H4.600Z" fill="#1f9a4a"/><path d="M5 9.500H11" stroke="#74d894" stroke-width="0.600"/><path d="M0.700 2.900L4.300 2.800V4.500L0.900 3.900Z" fill="#f1f1f1"/><path d="M0.800 3.400L4.300 3.700" stroke="#444" stroke-width="0.350"/><path d="M0.800 5.300L4.100 6.100V7.500L1 6.500Z" fill="#f1f1f1"/><path d="M0.900 5.900L4.100 6.800" stroke="#444" stroke-width="0.350"/><path d="M1 8.400L4.100 9.400V10.800L1.200 9.700Z" fill="#f1f1f1"/><path d="M1.100 9L4.100 10.100" stroke="#444" stroke-width="0.350"/></svg>
<div class="t" style="left:144.50px;top:187.00px;font-size:9.00px;color:#1c1c1c;">123 - Copy.tgz</div>
<div class="t" style="left:320.40px;top:187.00px;font-size:9.00px;color:#6d6d6d;transform:scaleX(0.9303);">08-Jan-21 4:40 PM</div>
<div class="t" style="left:426.00px;top:187.00px;font-size:9.00px;color:#6d6d6d;transform:scaleX(0.9241);">WinRAR archive</div>
<div class="t" style="left:540.00px;top:187.00px;font-size:9.00px;color:#6d6d6d;transform:scaleX(0.8566);">39 KB</div>
<svg class="b" style="left:129.8px;top:201.79999999999998px;" width="12" height="12.2" viewBox="0 0 12 12"><path d="M0.200 2.700L3.800 0.200L11.700 1.300Q12.300 3 11.700 4.600Q12.300 6.400 11.700 8Q12.300 9.700 11.700 11.400L4.300 11.800L0.800 10.500L1 9.200L0.500 7.500L0.800 6L0.300 4.300Z" fill="#1d1622"/><path d="M1 2.500L3.900 0.600L11 1.500L4.800 2.100Z" fill="#8c1a3c"/><path d="M2.900 1.200L4.100 0.600L5.800 2L4.500 2.200Z" fill="#e8a030"/><path d="M4.800 2.300H11.200Q11.700 3.300 11.200 4.300H4.800Z" fill="#d92a84"/><path d="M5.200 3.100H11" stroke="#f584c0" stroke-width="0.600"/><path d="M4.600 5.600H11.200Q11.700 6.500 11.200 7.400H4.600Z" fill="#3562c6"/><path d="M5 6.300H11" stroke="#86b4f2" stroke-width="0.600"/><path d="M4.600 8.800H11.200Q11.700 9.700 11.200 10.700H4.600Z" fill="#1f9a4a"/><path d="M5 9.500H11" stroke="#74d894" stroke-width="0.600"/><path d="M0.700 2.900L4.300 2.800V4.500L0.900 3.900Z" fill="#f1f1f1"/><path d="M0.800 3.400L4.300 3.700" stroke="#444" stroke-width="0.350"/><path d="M0.800 5.300L4.100 6.100V7.500L1 6.500Z" fill="#f1f1f1"/><path d="M0.900 5.900L4.100 6.800" stroke="#444" stroke-width="0.350"/><path d="M1 8.400L4.100 9.400V10.800L1.200 9.700Z" fill="#f1f1f1"/><path d="M1.100 9L4.100 10.100" stroke="#444" stroke-width="0.350"/></svg>
<div class="t" style="left:144.50px;top:202.00px;font-size:9.00px;color:#1c1c1c;">adv.tgz</div>
<div class="t" style="left:320.40px;top:202.00px;font-size:9.00px;color:#6d6d6d;transform:scaleX(0.9303);">08-Jan-21 4:40 PM</div>
<div class="t" style="left:426.00px;top:202.00px;font-size:9.00px;color:#6d6d6d;transform:scaleX(0.9241);">WinRAR archive</div>
<div class="t" style="left:540.00px;top:202.00px;font-size:9.00px;color:#6d6d6d;transform:scaleX(0.8566);">39 KB</div>
<svg class="b" style="left:129.8px;top:217.1px;" width="12" height="12.2" viewBox="0 0 12 12"><path d="M0.200 2.700L3.800 0.200L11.700 1.300Q12.300 3 11.700 4.600Q12.300 6.400 11.700 8Q12.300 9.700 11.700 11.400L4.300 11.800L0.800 10.500L1 9.200L0.500 7.500L0.800 6L0.300 4.300Z" fill="#1d1622"/><path d="M1 2.500L3.900 0.600L11 1.500L4.800 2.100Z" fill="#8c1a3c"/><path d="M2.900 1.200L4.100 0.600L5.800 2L4.500 2.200Z" fill="#e8a030"/><path d="M4.800 2.300H11.200Q11.700 3.300 11.200 4.300H4.800Z" fill="#d92a84"/><path d="M5.200 3.100H11" stroke="#f584c0" stroke-width="0.600"/><path d="M4.600 5.600H11.200Q11.700 6.500 11.200 7.400H4.600Z" fill="#3562c6"/><path d="M5 6.300H11" stroke="#86b4f2" stroke-width="0.600"/><path d="M4.600 8.800H11.200Q11.700 9.700 11.200 10.700H4.600Z" fill="#1f9a4a"/><path d="M5 9.500H11" stroke="#74d894" stroke-width="0.600"/><path d="M0.700 2.900L4.300 2.800V4.500L0.900 3.900Z" fill="#f1f1f1"/><path d="M0.800 3.400L4.300 3.700" stroke="#444" stroke-width="0.350"/><path d="M0.800 5.300L4.100 6.100V7.500L1 6.500Z" fill="#f1f1f1"/><path d="M0.900 5.900L4.100 6.800" stroke="#444" stroke-width="0.350"/><path d="M1 8.400L4.100 9.400V10.800L1.200 9.700Z" fill="#f1f1f1"/><path d="M1.100 9L4.100 10.100" stroke="#444" stroke-width="0.350"/></svg>
<div class="t" style="left:144.50px;top:217.00px;font-size:9.00px;color:#1c1c1c;">All.tgz</div>
<div class="t" style="left:320.40px;top:217.00px;font-size:9.00px;color:#6d6d6d;transform:scaleX(0.9780);">11-Jan-21 5:39 PM</div>
<div class="t" style="left:426.00px;top:217.00px;font-size:9.00px;color:#6d6d6d;transform:scaleX(0.9241);">WinRAR archive</div>
<div class="t" style="left:544.30px;top:217.00px;font-size:9.00px;color:#6d6d6d;transform:scaleX(0.8559);">6 KB</div>
<svg class="b" style="left:129.8px;top:232.5px;" width="12" height="12.2" viewBox="0 0 12 12"><path d="M0.200 2.700L3.800 0.200L11.700 1.300Q12.300 3 11.700 4.600Q12.300 6.400 11.700 8Q12.300 9.700 11.700 11.400L4.300 11.800L0.800 10.500L1 9.200L0.500 7.500L0.800 6L0.300 4.300Z" fill="#1d1622"/><path d="M1 2.500L3.900 0.600L11 1.500L4.800 2.100Z" fill="#8c1a3c"/><path d="M2.900 1.200L4.100 0.600L5.800 2L4.500 2.200Z" fill="#e8a030"/><path d="M4.800 2.300H11.200Q11.700 3.300 11.200 4.300H4.800Z" fill="#d92a84"/><path d="M5.200 3.100H11" stroke="#f584c0" stroke-width="0.600"/><path d="M4.600 5.600H11.200Q11.700 6.500 11.200 7.400H4.600Z" fill="#3562c6"/><path d="M5 6.300H11" stroke="#86b4f2" stroke-width="0.600"/><path d="M4.600 8.800H11.200Q11.700 9.700 11.200 10.700H4.600Z" fill="#1f9a4a"/><path d="M5 9.500H11" stroke="#74d894" stroke-width="0.600"/><path d="M0.700 2.900L4.300 2.800V4.500L0.900 3.900Z" fill="#f1f1f1"/><path d="M0.800 3.400L4.300 3.700" stroke="#444" stroke-width="0.350"/><path d="M0.800 5.300L4.100 6.100V7.500L1 6.500Z" fill="#f1f1f1"/><path d="M0.900 5.900L4.100 6.800" stroke="#444" stroke-width="0.350"/><path d="M1 8.400L4.100 9.400V10.800L1.200 9.700Z" fill="#f1f1f1"/><path d="M1.100 9L4.100 10.100" stroke="#444" stroke-width="0.350"/></svg>
<div class="t" style="left:144.50px;top:233.00px;font-size:9.00px;color:#1c1c1c;">Test.tgz</div>
<div class="t" style="left:320.40px;top:233.00px;font-size:9.00px;color:#6d6d6d;transform:scaleX(0.9303);">08-Jan-21 4:40 PM</div>
<div class="t" style="left:426.00px;top:233.00px;font-size:9.00px;color:#6d6d6d;transform:scaleX(0.9241);">WinRAR archive</div>
<div class="t" style="left:540.00px;top:233.00px;font-size:9.00px;color:#6d6d6d;transform:scaleX(0.8566);">39 KB</div>
<div class="b" style="left:153px;top:159px;width:203px;height:348.5px;background:#eeeeee;border:1px solid #a8a8a8;box-sizing:border-box;box-shadow:1.800px 1.800px 1.300px rgba(0,0,0,0.600);"></div>
<div class="t" style="left:178.80px;top:165.00px;font-size:9.00px;color:#111;transform:scaleX(0.9218);font-weight:700;">Open</div>
<div class="t" style="left:178.80px;top:181.00px;font-size:9.00px;color:#111;transform:scaleX(0.9253);">Share with Skype</div>
<div class="t" style="left:178.80px;top:197.00px;font-size:9.00px;color:#111;transform:scaleX(0.9632);">Open with Sublime Text</div>
<div class="t" style="left:178.80px;top:213.00px;font-size:9.00px;color:#111;transform:scaleX(0.9507);">Open with WinRAR</div>
<div class="t" style="left:178.80px;top:229.00px;font-size:9.00px;color:#111;transform:scaleX(0.9294);">Extract files...</div>
<div class="t" style="left:178.80px;top:245.00px;font-size:9.00px;color:#111;transform:scaleX(0.9298);">Extract Here</div>
<div class="t" style="left:178.80px;top:261.00px;font-size:9.00px;color:#111;transform:scaleX(0.9706);">Extract to 1 test file\</div>
<div class="t" style="left:178.80px;top:277.00px;font-size:9.00px;color:#111;transform:scaleX(0.9833);">Edit with Notepad++</div>
<div class="t" style="left:178.80px;top:293.00px;font-size:9.00px;color:#111;transform:scaleX(0.9147);">EditPlus</div>
<div class="t" style="left:178.80px;top:309.00px;font-size:9.00px;color:#111;transform:scaleX(0.9651);">Scan with Microsoft Defender...</div>
<div class="t" style="left:178.80px;top:326.00px;font-size:9.00px;color:#111;transform:scaleX(0.8828);">Share</div>
<div class="t" style="left:178.80px;top:342.00px;font-size:9.00px;color:#111;transform:scaleX(0.9621);">Open with...</div>
<div class="t" style="left:178.80px;top:358.00px;font-size:9.00px;color:#111;transform:scaleX(0.9323);">Restore previous versions</div>
<div class="t" style="left:178.80px;top:379.00px;font-size:9.00px;color:#111;transform:scaleX(0.9283);">Send to</div>
<div class="t" style="left:178.80px;top:400.00px;font-size:9.00px;color:#111;transform:scaleX(0.9711);">Cut</div>
<div class="t" style="left:178.80px;top:416.00px;font-size:9.00px;color:#111;transform:scaleX(0.9520);">Copy</div>
<div class="t" style="left:178.80px;top:437.00px;font-size:9.00px;color:#111;transform:scaleX(0.9525);">Create shortcut</div>
<div class="t" style="left:178.80px;top:454.00px;font-size:9.00px;color:#111;transform:scaleX(0.9303);">Delete</div>
<div class="t" style="left:178.80px;top:470.00px;font-size:9.00px;color:#111;transform:scaleX(0.9172);">Rename</div>
<div class="t" style="left:178.80px;top:491.00px;font-size:9.00px;color:#111;transform:scaleX(0.9313);">Properties</div>
<div class="b" style="left:161px;top:373.9px;width:187px;height:1px;background:#a6a6a6;"></div>
<div class="b" style="left:161px;top:395.4px;width:187px;height:1px;background:#a6a6a6;"></div>
<div class="b" style="left:161px;top:432.5px;width:187px;height:1px;background:#a6a6a6;"></div>
<div class="b" style="left:161px;top:485.8px;width:187px;height:1px;background:#a6a6a6;"></div>
<svg class="b" style="left:342px;top:380.5px;" width="6" height="9" viewBox="0 0 6 9"><path d="M0.700 0.700l4 3.800-4 3.800" fill="none" stroke="#444" stroke-width="0.900"/></svg>
<svg class="b" style="left:161.5px;top:181.7px;" width="10.8" height="10.8" viewBox="0 0 10.800 10.800"><circle cx="4.600" cy="4.600" r="4.400" fill="#2aa9ee"/><circle cx="6.200" cy="6.200" r="4.400" fill="#2aa9ee"/><text x="5.400" y="8.100" font-size="7.600" font-weight="700" text-anchor="middle" fill="#fff" font-family="Liberation Sans, sans-serif">S</text></svg>
<svg class="b" style="left:160.8px;top:213.0px;" width="12.3" height="12" viewBox="0 0 12 12"><path d="M0.200 2.700L3.800 0.200L11.700 1.300Q12.300 3 11.700 4.600Q12.300 6.400 11.700 8Q12.300 9.700 11.700 11.400L4.300 11.800L0.800 10.500L1 9.200L0.500 7.500L0.800 6L0.300 4.300Z" fill="#1d1622"/><path d="M1 2.500L3.900 0.600L11 1.500L4.800 2.100Z" fill="#8c1a3c"/><path d="M2.900 1.200L4.100 0.600L5.800 2L4.500 2.200Z" fill="#e8a030"/><path d="M4.800 2.300H11.200Q11.700 3.300 11.200 4.300H4.800Z" fill="#d92a84"/><path d="M5.200 3.100H11" stroke="#f584c0" stroke-width="0.600"/><path d="M4.600 5.600H11.200Q11.700 6.500 11.200 7.400H4.600Z" fill="#3562c6"/><path d="M5 6.300H11" stroke="#86b4f2" stroke-width="0.600"/><path d="M4.600 8.800H11.200Q11.700 9.700 11.200 10.700H4.600Z" fill="#1f9a4a"/><path d="M5 9.500H11" stroke="#74d894" stroke-width="0.600"/><path d="M0.700 2.900L4.300 2.800V4.500L0.900 3.900Z" fill="#f1f1f1"/><path d="M0.800 3.400L4.300 3.700" stroke="#444" stroke-width="0.350"/><path d="M0.800 5.300L4.100 6.100V7.500L1 6.500Z" fill="#f1f1f1"/><path d="M0.900 5.900L4.100 6.800" stroke="#444" stroke-width="0.350"/><path d="M1 8.400L4.100 9.400V10.800L1.200 9.700Z" fill="#f1f1f1"/><path d="M1.100 9L4.100 10.100" stroke="#444" stroke-width="0.350"/></svg>
<svg class="b" style="left:160.8px;top:229.1px;" width="12.3" height="12" viewBox="0 0 12 12"><path d="M0.200 2.700L3.800 0.200L11.700 1.300Q12.300 3 11.700 4.600Q12.300 6.400 11.700 8Q12.300 9.700 11.700 11.400L4.300 11.800L0.800 10.500L1 9.200L0.500 7.500L0.800 6L0.300 4.300Z" fill="#1d1622"/><path d="M1 2.500L3.900 0.600L11 1.500L4.800 2.100Z" fill="#8c1a3c"/><path d="M2.900 1.200L4.100 0.600L5.800 2L4.500 2.200Z" fill="#e8a030"/><path d="M4.800 2.300H11.200Q11.700 3.300 11.200 4.300H4.800Z" fill="#d92a84"/><path d="M5.200 3.100H11" stroke="#f584c0" stroke-width="0.600"/><path d="M4.600 5.600H11.200Q11.700 6.500 11.200 7.400H4.600Z" fill="#3562c6"/><path d="M5 6.300H11" stroke="#86b4f2" stroke-width="0.600"/><path d="M4.600 8.800H11.200Q11.700 9.700 11.200 10.700H4.600Z" fill="#1f9a4a"/><path d="M5 9.500H11" stroke="#74d894" stroke-width="0.600"/><path d="M0.700 2.900L4.300 2.800V4.500L0.900 3.900Z" fill="#f1f1f1"/><path d="M0.800 3.400L4.300 3.700" stroke="#444" stroke-width="0.350"/><path d="M0.800 5.300L4.100 6.100V7.500L1 6.500Z" fill="#f1f1f1"/><path d="M0.900 5.900L4.100 6.800" stroke="#444" stroke-width="0.350"/><path d="M1 8.400L4.100 9.400V10.800L1.200 9.700Z" fill="#f1f1f1"/><path d="M1.100 9L4.100 10.100" stroke="#444" stroke-width="0.350"/></svg>
<svg class="b" style="left:160.8px;top:245.1px;" width="12.3" height="12" viewBox="0 0 12 12"><path d="M0.200 2.700L3.800 0.200L11.700 1.300Q12.300 3 11.700 4.600Q12.300 6.400 11.700 8Q12.300 9.700 11.700 11.400L4.300 11.800L0.800 10.500L1 9.200L0.500 7.500L0.800 6L0.300 4.300Z" fill="#1d1622"/><path d="M1 2.500L3.900 0.600L11 1.500L4.800 2.100Z" fill="#8c1a3c"/><path d="M2.900 1.200L4.100 0.600L5.800 2L4.500 2.200Z" fill="#e8a030"/><path d="M4.800 2.300H11.200Q11.700 3.300 11.200 4.300H4.800Z" fill="#d92a84"/><path d="M5.200 3.100H11" stroke="#f584c0" stroke-width="0.600"/><path d="M4.600 5.600H11.200Q11.700 6.500 11.200 7.400H4.600Z" fill="#3562c6"/><path d="M5 6.300H11" stroke="#86b4f2" stroke-width="0.600"/><path d="M4.600 8.800H11.200Q11.700 9.700 11.200 10.700H4.600Z" fill="#1f9a4a"/><path d="M5 9.500H11" stroke="#74d894" stroke-width="0.600"/><path d="M0.700 2.900L4.300 2.800V4.500L0.900 3.900Z" fill="#f1f1f1"/><path d="M0.800 3.400L4.300 3.700" stroke="#444" stroke-width="0.350"/><path d="M0.800 5.300L4.100 6.100V7.500L1 6.500Z" fill="#f1f1f1"/><path d="M0.900 5.900L4.100 6.800" stroke="#444" stroke-width="0.350"/><path d="M1 8.400L4.100 9.400V10.800L1.200 9.700Z" fill="#f1f1f1"/><path d="M1.100 9L4.100 10.100" stroke="#444" stroke-width="0.350"/></svg>
<svg class="b" style="left:160.8px;top:261.2px;" width="12.3" height="12" viewBox="0 0 12 12"><path d="M0.200 2.700L3.800 0.200L11.700 1.300Q12.300 3 11.700 4.600Q12.300 6.400 11.700 8Q12.300 9.700 11.700 11.400L4.300 11.800L0.800 10.500L1 9.200L0.500 7.500L0.800 6L0.300 4.300Z" fill="#1d1622"/><path d="M1 2.500L3.900 0.600L11 1.500L4.800 2.100Z" fill="#8c1a3c"/><path d="M2.900 1.200L4.100 0.600L5.800 2L4.500 2.200Z" fill="#e8a030"/><path d="M4.800 2.300H11.200Q11.700 3.300 11.200 4.300H4.800Z" fill="#d92a84"/><path d="M5.200 3.100H11" stroke="#f584c0" stroke-width="0.600"/><path d="M4.600 5.600H11.200Q11.700 6.500 11.200 7.400H4.600Z" fill="#3562c6"/><path d="M5 6.300H11" stroke="#86b4f2" stroke-width="0.600"/><path d="M4.600 8.800H11.200Q11.700 9.700 11.200 10.700H4.600Z" fill="#1f9a4a"/><path d="M5 9.500H11" stroke="#74d894" stroke-width="0.600"/><path d="M0.700 2.900L4.300 2.800V4.500L0.900 3.900Z" fill="#f1f1f1"/><path d="M0.800 3.400L4.300 3.700" stroke="#444" stroke-width="0.350"/><path d="M0.800 5.300L4.100 6.100V7.500L1 6.500Z" fill="#f1f1f1"/><path d="M0.900 5.900L4.100 6.800" stroke="#444" stroke-width="0.350"/><path d="M1 8.400L4.100 9.400V10.800L1.200 9.700Z" fill="#f1f1f1"/><path d="M1.100 9L4.100 10.100" stroke="#444" stroke-width="0.350"/></svg>
<svg class="b" style="left:160.3px;top:277.3px;" width="12" height="12" viewBox="0 0 12 12"><rect x="0.600" y="1.200" width="9.200" height="10" fill="#fbfbf6" stroke="#777a70" stroke-width="0.900"/><rect x="1.500" y="4.500" width="7.400" height="5.800" fill="#d6e25a"/><path d="M1.500 6.500l4 3.800h-4z" fill="#6cc02c"/><path d="M1.500 4.500v2l4 3.800h2z" fill="#a8d444"/><path d="M5.500 4.500h3.400v3z" fill="#f4f0a4"/><path d="M1.500 3h7.400" stroke="#c8c8c0" stroke-width="0.600"/><path d="M11 0.300L11.900 1.300L6.300 8L4.800 8.600L5.200 7Z" fill="#e8b82c" stroke="#54400c" stroke-width="0.500"/></svg>
<svg class="b" style="left:161px;top:294px;" width="12" height="11" viewBox="0 0 12 11"><path d="M0.800 5.800L6 0.500L10 3.200L5 8.300Z" fill="#e96666"/><path d="M2.500 4.200L6.300 1.400L8.500 2.900L4 6Z" fill="#f29c98"/><path d="M0.800 5.800L5 8.300L4.200 9.600L0.300 7.200Z" fill="#f5d2cc"/><path d="M5.200 8.600h2.600v2.200h-2.600z" fill="#3aa63a"/><path d="M8 7.600h3v3.200h-3z" fill="#f0c22e"/><path d="M2 9.800h3" stroke="#d04a4a" stroke-width="0.800"/></svg>
<svg class="b" style="left:160.6px;top:309.8px;" width="12" height="12" viewBox="0 0 12 12"><rect x="0" y="0" width="12" height="12" fill="#1b78d2"/><path d="M6 1.200c1.600 .9 3.300 1.100 4.700 1.100v3.700c0 2.600-2.300 4.200-4.700 4.900-2.400-.7-4.700-2.300-4.700-4.900v-3.700c1.400 0 3.100-.2 4.700-1.100z" fill="#fff"/><path d="M6 1.200v9.700M1.300 5.700h9.400" stroke="#1b78d2" stroke-width="1"/></svg>
<svg class="b" style="left:161px;top:326px;" width="11.5" height="10" viewBox="0 0 11.500 10"><path d="M2.800 3.800h-2.300v5.600h7.200v-1.800" fill="none" stroke="#333" stroke-width="1"/><path d="M3 7.800q0.300-4 4-4.300v-2.400l3.800 3.400-3.800 3.400v-2.300q-2.500 0-4 2.200z" fill="none" stroke="#333" stroke-width="0.900" stroke-linejoin="round"/></svg>
</div></body></html>
